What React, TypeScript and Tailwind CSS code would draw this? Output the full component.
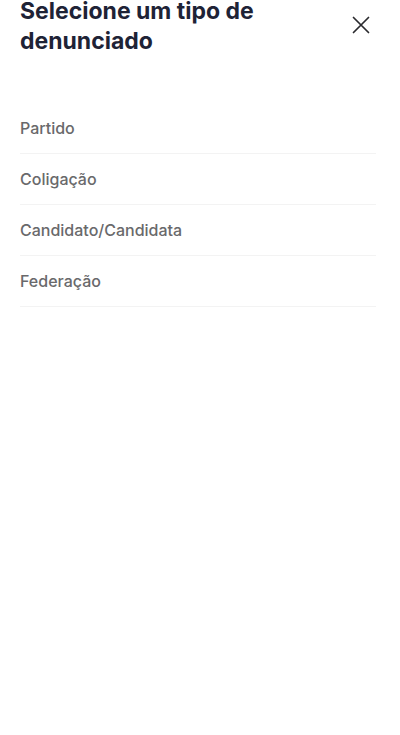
import React from 'react';

const options = ['Partido', 'Coligação', 'Candidato/Candidata', 'Federação'];

const App: React.FC = () => {
  return (
    <div className="w-[400px] h-[735px] bg-white overflow-hidden" style={{ fontFamily: 'Inter, "Liberation Sans", Arial, sans-serif' }}>
      <div className="flex justify-between items-start pl-5 pr-[30px] mt-[-4px]">
        <h1 className="text-[23px] leading-[30px] font-bold text-[#1e2336] w-[280px]">
          Selecione um tipo de denunciado
        </h1>
        <button className="mt-[20px] p-0 text-[#2a2a2e]">
          <svg width="18" height="18" viewBox="0 0 18 18" fill="none" stroke="currentColor" strokeWidth="1.7" strokeLinecap="round">
            <path d="M1.5 1.5L16.5 16.5M16.5 1.5L1.5 16.5" />
          </svg>
        </button>
      </div>

      <ul className="mt-[47px] pl-5 pr-6">
        {options.map((opt) => (
          <li
            key={opt}
            className="pt-[14px] pb-[14px] text-[16px] leading-[22px] font-medium text-[#69696b] border-b border-[#f3f3f3]"
          >
            {opt}
          </li>
        ))}
      </ul>
    </div>
  );
};

export default App;
